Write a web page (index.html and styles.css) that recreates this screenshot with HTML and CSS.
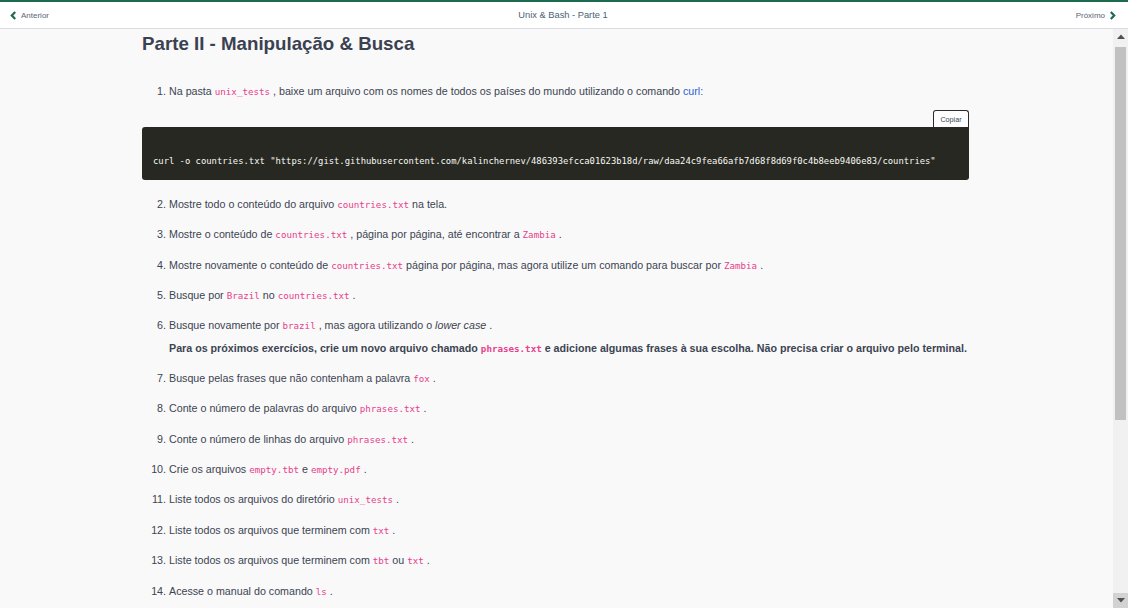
FILE: index.html
```html
<!DOCTYPE html>
<html lang="pt-BR">
<head>
<meta charset="utf-8">
<title>Unix &amp; Bash - Parte 1</title>
<link rel="stylesheet" href="styles.css">
</head>
<body>
<div class="app">
  <header class="topbar">
    <a class="nav nav-prev" href="#">
      <svg class="chev" width="7" height="9" viewBox="0 0 7 9"><polyline points="5.2,1 1.8,4.5 5.2,8" fill="none" stroke="#1d6a4e" stroke-width="2.2"/></svg>
      <span>Anterior</span>
    </a>
    <div class="title">Unix &amp; Bash - Parte 1</div>
    <a class="nav nav-next" href="#">
      <span>Próximo</span>
      <svg class="chev" width="7" height="9" viewBox="0 0 7 9"><polyline points="1.8,1 5.2,4.5 1.8,8" fill="none" stroke="#1d6a4e" stroke-width="2.2"/></svg>
    </a>
  </header>
  <div class="viewport">
    <main class="content">
      <div class="container">
        <h2 class="section-title">Parte II - Manipulação &amp; Busca</h2>
        <ol class="tasks first">
          <li>Na pasta <code>unix_tests</code> , baixe um arquivo com os nomes de todos os países do mundo utilizando o comando <a class="link" href="#">curl:</a></li>
        </ol>
        <div class="codebox">
          <button class="copy" type="button">Copiar</button>
          <pre class="code">curl -o countries.txt "https://gist.githubusercontent.com/kalinchernev/486393efcca01623b18d/raw/daa24c9fea66afb7d68f8d69f0c4b8eeb9406e83/countries"</pre>
        </div>
        <ol class="tasks rest" start="2">
          <li>Mostre todo o conteúdo do arquivo <code>countries.txt</code> na tela.</li>
          <li>Mostre o conteúdo de <code>countries.txt</code> , página por página, até encontrar a <code>Zambia</code> .</li>
          <li>Mostre novamente o conteúdo de <code>countries.txt</code> página por página, mas agora utilize um comando para buscar por <code>Zambia</code> .</li>
          <li>Busque por <code>Brazil</code> no <code>countries.txt</code> .</li>
          <li>Busque novamente por <code>brazil</code> , mas agora utilizando o <em>lower case</em> .
            <p class="note">Para os próximos exercícios, crie um novo arquivo chamado <code>phrases.txt</code> e adicione algumas frases à sua escolha. Não precisa criar o arquivo pelo terminal.</p>
          </li>
          <li>Busque pelas frases que não contenham a palavra <code>fox</code> .</li>
          <li>Conte o número de palavras do arquivo <code>phrases.txt</code> .</li>
          <li>Conte o número de linhas do arquivo <code>phrases.txt</code> .</li>
          <li>Crie os arquivos <code>empty.tbt</code> e <code>empty.pdf</code> .</li>
          <li>Liste todos os arquivos do diretório <code>unix_tests</code> .</li>
          <li>Liste todos os arquivos que terminem com <code>txt</code> .</li>
          <li>Liste todos os arquivos que terminem com <code>tbt</code> ou <code>txt</code> .</li>
          <li>Acesse o manual do comando <code>ls</code> .</li>
        </ol>
      </div>
    </main>
    <div class="scrollbar" aria-hidden="true">
      <div class="sb-btn sb-up"><svg width="8" height="5" viewBox="0 0 8 5"><polygon points="0,5 4,0.5 8,5" fill="#505050"/></svg></div>
      <div class="sb-track"><div class="sb-thumb"></div></div>
      <div class="sb-btn sb-down"><svg width="8" height="5" viewBox="0 0 8 5"><polygon points="0,0 8,0 4,4.5" fill="#505050"/></svg></div>
    </div>
  </div>
</div>
</body>
</html>
```
FILE: styles.css
```css
* { box-sizing: border-box; }
html, body { margin: 0; padding: 0; height: 100%; }
body {
  font-family: "Liberation Sans", Arial, sans-serif;
  color: #3c4452;
  background: #f9f9f9;
  overflow: hidden;
}
.app {
  display: flex;
  flex-direction: column;
  height: 100vh;
}
.topbar {
  flex: 0 0 29px;
  display: grid;
  grid-template-columns: 1fr auto 1fr;
  align-items: center;
  background: #fff;
  border-top: 2px solid #1d6a4e;
  border-bottom: 1px solid #dcdbe4;
  padding: 0 12px 0 10px;
}
.nav {
  display: flex;
  align-items: center;
  gap: 4px;
  font-size: 8px;
  color: #5a6676;
  text-decoration: none;
}
.nav-next { justify-self: end; }
.chev { display: block; }
.title {
  font-size: 9.3px;
  color: #4b6274;
}
.viewport {
  flex: 1 1 auto;
  min-height: 0;
  display: flex;
}
.content {
  flex: 1 1 auto;
  min-width: 0;
  overflow: hidden;
  background: #f9f9f9;
  padding-right: 2px;
}
.scrollbar {
  flex: 0 0 15px;
  display: flex;
  flex-direction: column;
  background: #f1f1f1;
}
.sb-btn {
  flex: 0 0 15px;
  display: flex;
  align-items: center;
  justify-content: center;
}
.sb-btn svg { display: block; }
.sb-down { background: #d2d2d2; }
.sb-track {
  flex: 1 1 auto;
  padding: 3px 2px 0;
}
.sb-thumb {
  height: 373px;
  background: #c1c1c1;
}
.container {
  width: 827px;
  margin: 0 auto;
}
.section-title {
  margin: 4px 0 0;
  font-size: 18.72px;
  line-height: 22px;
  font-weight: bold;
  color: #3a4150;
}
.tasks {
  margin: 0;
  padding-left: 27px;
  font-size: 10.7px;
  line-height: 16.5px;
}
.tasks.first { margin-top: 28px; }
.tasks.rest { margin-top: 15.75px; }
.tasks li + li { margin-top: 13.9px; }
.tasks code {
  font-family: "DejaVu Sans Mono", monospace;
  font-size: 9.2px;
  line-height: 1;
  color: #e83e8c;
}
.tasks em { font-style: italic; }
.link { color: #2f62d6; text-decoration: none; }
.note {
  margin: 5.7px 0 0;
  font-weight: bold;
  white-space: nowrap;
}
.codebox {
  margin-top: 10.5px;
  display: flex;
  flex-direction: column;
  align-items: flex-end;
}
.copy {
  height: 17px;
  width: 36px;
  padding: 0;
  margin: 0;
  background: #fff;
  border: 1px solid #2b2b2b;
  border-bottom: none;
  border-radius: 3px 3px 0 0;
  font-family: "Liberation Sans", Arial, sans-serif;
  font-size: 7.2px;
  color: #3b4656;
}
.code {
  align-self: stretch;
  margin: 0;
  height: 53px;
  padding: 27px 11px 12px;
  background: #272822;
  color: #f8f8f2;
  border-radius: 3px 0 3px 3px;
  font-family: "DejaVu Sans Mono", monospace;
  font-size: 8.85px;
  line-height: 14px;
  white-space: pre;
  overflow: hidden;
}
```
